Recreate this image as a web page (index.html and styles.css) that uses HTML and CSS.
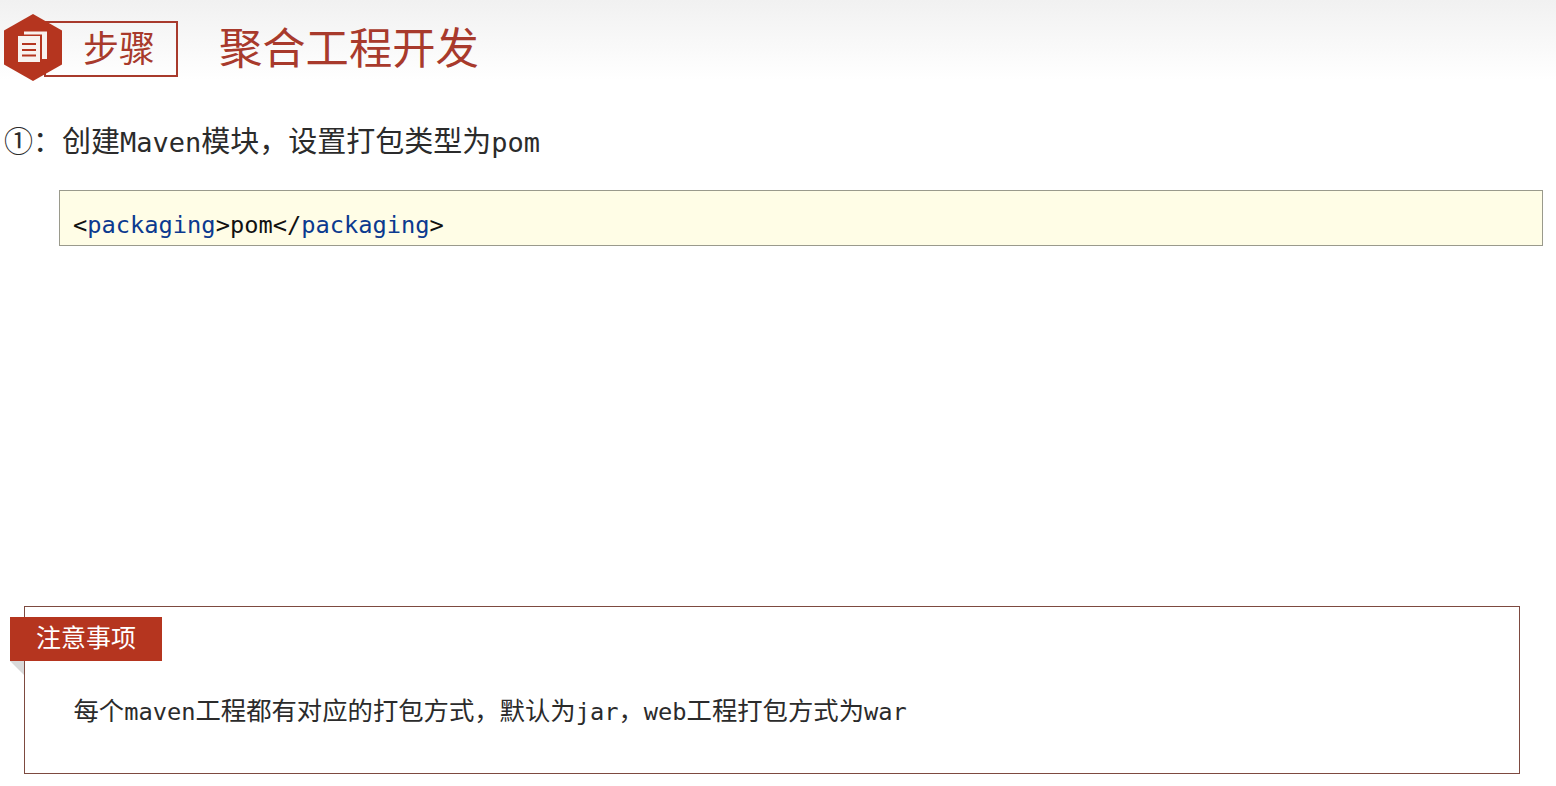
FILE: index.html
```html
<!DOCTYPE html>
<html lang="zh">
<head>
<meta charset="utf-8">
<title>聚合工程开发</title>
<link rel="stylesheet" href="styles.css">
</head>
<body>
<header class="band">
  <div class="badge">
    <svg class="hex" viewBox="0 0 58 67" aria-hidden="true">
      <polygon points="29,0 58,16.5 58,50.5 29,67 0,50.5 0,16.5" fill="#b5351f"/>
      <path d="M20 17.500H43V45H38V20.500H20z" fill="#f8f2ef"/>
      <rect x="14" y="22" width="22" height="26" fill="#f8f2ef"/>
      <path d="M18 30h14M18 36h14M18 41.500h14" stroke="#b5351f" stroke-width="2" fill="none"/>
    </svg>
    <span class="badge-box">步骤</span>
  </div>
  <h1 class="title">聚合工程开发</h1>
</header>
<p class="step">①：创建<span class="m">Maven</span>模块，设置打包类型为<span class="m">pom</span></p>
<pre class="code"><code>&lt;<span class="tag">packaging</span>&gt;pom&lt;/<span class="tag">packaging</span>&gt;</code></pre>
<section class="note">
  <div class="note-tag">注意事项</div>
  <p class="note-text">每个<span class="n">maven</span>工程都有对应的打包方式，默认为<span class="n">jar</span>，<span class="n">web</span>工程打包方式为<span class="n">war</span></p>
</section>
</body>
</html>
```
FILE: styles.css
```css
* { box-sizing: border-box; }
html, body { margin: 0; padding: 0; }
body {
  width: 1556px;
  height: 786px;
  overflow: hidden;
  background: #fff;
  font-family: "Noto Sans CJK SC", sans-serif;
  color: #2b2b2b;
}
.band {
  height: 80px;
  padding: 14px 0 0 4px;
  display: flex;
  align-items: flex-start;
  background: linear-gradient(#f1f1f1, #ffffff);
}
.badge {
  position: relative;
  width: 174px;
  height: 67px;
}
.hex {
  position: absolute;
  left: 0;
  top: 0;
  width: 58px;
  height: 67px;
}
.badge-box {
  display: block;
  margin: 7px 0 0 40px;
  width: 134px;
  height: 56px;
  border: 2px solid #a83a2c;
  padding-left: 37px;
  font-size: 36px;
  line-height: 46px;
  color: #a83a2c;
}
.title {
  margin: 0 0 0 41px;
  font-size: 43.300px;
  font-weight: 400;
  line-height: 62px;
  color: #a83a2c;
}
.step {
  margin: 37px 0 0 4px;
  font-size: 29px;
  line-height: 44px;
  height: 46px;
  white-space: nowrap;
}
.m {
  font-family: "DejaVu Sans Mono", monospace;
  font-size: 27px;
}
.code {
  margin: 27px 13px 0 59px;
  height: 56px;
  border: 1px solid #9a9a8c;
  background: #fffde6;
  padding: 16px 0 0 13px;
  font-family: "DejaVu Sans Mono", monospace;
  font-size: 23.700px;
  line-height: 36px;
  color: #111;
}
.code code { font: inherit; }
.tag { color: #0b3a8f; }
.note {
  position: relative;
  margin: 360px 0 0 24px;
  width: 1496px;
  height: 168px;
  border: 1px solid #7d4a40;
  padding: 82px 0 0 48.500px;
}
.note-tag {
  position: absolute;
  left: -15px;
  top: 10px;
  width: 152px;
  height: 44px;
  padding-left: 26px;
  background: #b5351f;
  color: #fff;
  font-size: 25px;
  line-height: 38px;
}
.note-tag::after {
  content: "";
  position: absolute;
  left: 0;
  top: 44px;
  border-top: 14px solid #d9d9d9;
  border-left: 14px solid transparent;
}
.note-text {
  margin: 0;
  font-size: 25.350px;
  line-height: 40px;
  white-space: nowrap;
}
.n {
  font-family: "DejaVu Sans Mono", monospace;
  font-size: 23.700px;
}
```
